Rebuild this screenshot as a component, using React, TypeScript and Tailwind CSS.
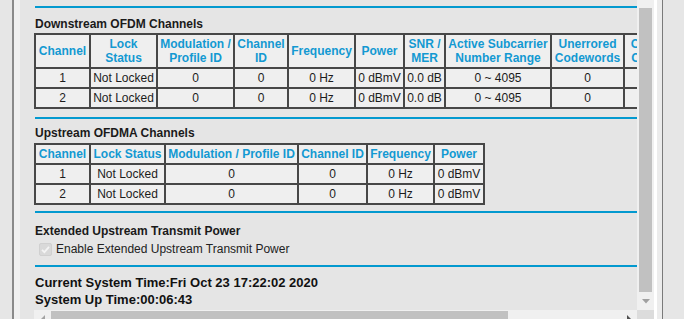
import React from "react";

const th = "border-r-2 border-b-2 border-[#474747] bg-[#efefef] text-[#1399d2] font-bold leading-[14px] text-center align-middle px-0 whitespace-nowrap overflow-hidden";
const td = "border-r-2 border-b-2 border-[#474747] bg-[#efefef] text-[#1c1c1c] leading-[14px] text-center align-middle px-0 whitespace-nowrap overflow-hidden";

function BlueLine({ className = "" }: { className?: string }) {
  return <div className={"ml-px h-[2px] bg-[#0399cf] " + className} />;
}

export default function App() {
  const ds = [
    { w: 55, h: <>Channel</> },
    { w: 67, h: <>Lock<br />Status</> },
    { w: 77, h: <>Modulation /<br />Profile ID</> },
    { w: 54, h: <>Channel<br />ID</> },
    { w: 67, h: <>Frequency</> },
    { w: 49, h: <>Power</> },
    { w: 41, h: <>SNR /<br />MER</> },
    { w: 106, h: <>Active Subcarrier<br />Number Range</> },
    { w: 73, h: <>Unerrored<br />Codewords</> },
    { w: 80, h: <>Correctable<br />Codewords</> },
    { w: 90, h: <>Uncorrectable<br />Codewords</> },
  ];
  const dsRows = [
    ["1", "Not Locked", "0", "0", "0 Hz", "0 dBmV", "0.0 dB", "0 ~ 4095", "0", "0", "0"],
    ["2", "Not Locked", "0", "0", "0 Hz", "0 dBmV", "0.0 dB", "0 ~ 4095", "0", "0", "0"],
  ];
  const us = [
    { w: 55, h: "Channel" },
    { w: 75, h: "Lock Status" },
    { w: 133, h: "Modulation / Profile ID" },
    { w: 69, h: "Channel ID" },
    { w: 67, h: "Frequency" },
    { w: 50, h: "Power" },
  ];
  const usRows = [
    ["1", "Not Locked", "0", "0", "0 Hz", "0 dBmV"],
    ["2", "Not Locked", "0", "0", "0 Hz", "0 dBmV"],
  ];
  const dsW = ds.reduce((a, c) => a + c.w, 0) + 2;
  const usW = us.reduce((a, c) => a + c.w, 0) + 2;

  return (
    <div className="w-[684px] h-[319px] overflow-hidden flex bg-[#e6e6e6] font-['Liberation_Sans',Arial,sans-serif]">
      <div className="w-[12px] shrink-0" />
      <div className="w-[2px] shrink-0 bg-[#8a8a8a]" />
      <div className="w-[6px] shrink-0 bg-[#f0f0f0]" />
      {/* panel */}
      <div className="w-[617px] shrink-0 flex bg-[#e5e5e5]">
        <div className="w-[14px] shrink-0" />
        <div className="w-[603px] flex flex-col">
          <div className="h-[310px] shrink-0 overflow-hidden text-[12px] text-[#1a1a1a]">
            <div className="h-[6px]" />
            <BlueLine />
            <div className="mt-[9px] pl-px leading-[14px] font-bold">Downstream OFDM Channels</div>
            <table
              className="mt-[2px] table-fixed border-separate border-spacing-0 border-l-2 border-t-2 border-[#474747]"
              style={{ width: dsW }}
            >
              <thead>
                <tr className="h-[34px]">
                  {ds.map((c, i) => (
                    <th key={i} className={th} style={{ width: c.w }}>
                      {c.h}
                    </th>
                  ))}
                </tr>
              </thead>
              <tbody>
                {dsRows.map((r, ri) => (
                  <tr key={ri} className="h-[20px]">
                    {r.map((v, i) => (
                      <td key={i} className={td}>
                        {v}
                      </td>
                    ))}
                  </tr>
                ))}
              </tbody>
            </table>
            <BlueLine className="mt-[8px]" />
            <div className="mt-[7px] pl-px leading-[14px] font-bold">Upstream OFDMA Channels</div>
            <table
              className="mt-[3px] table-fixed border-separate border-spacing-0 border-l-2 border-t-2 border-[#474747]"
              style={{ width: usW }}
            >
              <thead>
                <tr className="h-[20px]">
                  {us.map((c, i) => (
                    <th key={i} className={th} style={{ width: c.w }}>
                      {c.h}
                    </th>
                  ))}
                </tr>
              </thead>
              <tbody>
                {usRows.map((r, ri) => (
                  <tr key={ri} className="h-[20px]">
                    {r.map((v, i) => (
                      <td key={i} className={td}>
                        {v}
                      </td>
                    ))}
                  </tr>
                ))}
              </tbody>
            </table>
            <BlueLine className="mt-[6px]" />
            <div className="mt-[11px] pl-px leading-[14px] font-bold">Extended Upstream Transmit Power</div>
            <div className="mt-[4px] h-[14px] flex items-center">
              <span className="ml-[5px] w-[13px] h-[13px] rounded-[2px] bg-[#d9d9d9] border border-[#d0d0d0] flex items-center justify-center">
                <svg width="11" height="11" viewBox="0 0 11 11">
                  <path d="M2 5.8 L4.4 8.2 L9 2.8" fill="none" stroke="#f4f4f4" strokeWidth="1.8" />
                </svg>
              </span>
              <span className="ml-[4px] leading-[14px] text-[#222]">Enable Extended Upstream Transmit Power</span>
            </div>
            <BlueLine className="mt-[9px]" />
            <div className="mt-[7px] pl-px text-[13px] leading-[17px] font-bold text-[#111]">
              <div>Current System Time:Fri Oct 23 17:22:02 2020</div>
              <div>System Up Time:00:06:43</div>
            </div>
          </div>
          {/* horizontal scrollbar */}
          <div className="h-[17px] shrink-0 bg-[#f0f0f0] flex items-start">
            <div className="w-[17px] h-[17px] flex items-center justify-center">
              <svg width="6" height="8" viewBox="0 0 6 8">
                <path d="M5 0 L1 4 L5 8 Z" fill="#a3a3a3" />
              </svg>
            </div>
            <div className="mt-px h-[15px] w-[457px] bg-[#c1c1c1]" />
            <div className="flex-1" />
            <div className="w-[17px] h-[17px] flex items-center justify-center">
              <svg width="6" height="8" viewBox="0 0 6 8">
                <path d="M1 0 L5 4 L1 8 Z" fill="#505050" />
              </svg>
            </div>
          </div>
        </div>
      </div>
      {/* vertical scrollbar */}
      <div className="w-[17px] shrink-0 flex flex-col bg-[#f0f0f0]">
        <div className="h-[8px]" />
        <div className="mx-[2px] h-[284px] bg-[#c1c1c1]" />
        <div className="h-[18px] flex items-center justify-center">
          <svg width="8" height="5" viewBox="0 0 8 5">
            <path d="M0 0 L8 0 L4 4.5 Z" fill="#a0a0a0" />
          </svg>
        </div>
        <div className="flex-1 bg-[#dcdcdc]" />
      </div>
      <div className="w-[3px] shrink-0 bg-white" />
      <div className="w-[5px] shrink-0 bg-[#ececec]" />
      <div className="w-px shrink-0 bg-[#7a7a7a]" />
      <div className="flex-1" />
    </div>
  );
}
